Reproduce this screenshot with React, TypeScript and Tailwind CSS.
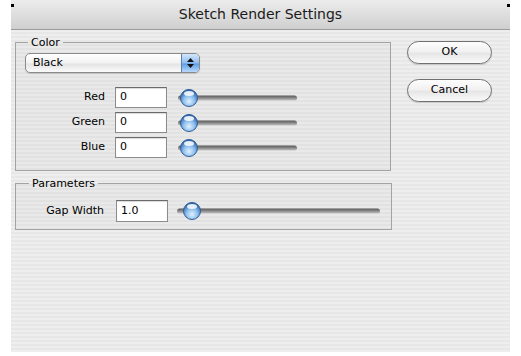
import React from "react";

function Slider({ width, knobX, trackStart, trackEnd }: { width: number; knobX: number; trackStart: number; trackEnd: number }) {
  return (
    <svg width={width} height={20} viewBox={`0 0 ${width} 20`} className="block">
      <defs>
        <linearGradient id="trk" x1="0" y1="0" x2="0" y2="1">
          <stop offset="0" stopColor="#585858" />
          <stop offset="0.5" stopColor="#8a8a8a" />
          <stop offset="1" stopColor="#c4c4c4" />
        </linearGradient>
        <radialGradient id="knob" cx="0.5" cy="0.7" r="0.65">
          <stop offset="0" stopColor="#e2f1ff" />
          <stop offset="0.5" stopColor="#8fc0ee" />
          <stop offset="1" stopColor="#2c64ae" />
        </radialGradient>
      </defs>
      <rect x={trackStart} y={7.5} width={trackEnd - trackStart} height={5} rx={2.5} fill="url(#trk)" />
      <circle cx={knobX} cy={10} r={8.5} fill="url(#knob)" stroke="#305e98" strokeWidth={1} />
      <ellipse cx={knobX} cy={5.5} rx={5} ry={2.5} fill="#ffffff" opacity={0.85} />
    </svg>
  );
}

function Field({ value, h }: { value: string; h: string }) {
  return (
    <div className={`w-[52px] ${h} bg-white border border-[#8c8c8c] border-t-[#6a6a6a] shadow-[inset_0_1px_1px_rgba(0,0,0,0.15)] pl-[4px] flex items-center text-[11px] text-black`}>
      {value}
    </div>
  );
}

function Row({ label, value }: { label: string; value: string }) {
  return (
    <div className="flex items-center h-[21px]">
      <div className="w-[80px] text-right text-[11px] text-black">{label}</div>
      <div className="ml-[10px]">
        <Field value={value} h="h-[21px]" />
      </div>
      <div className="ml-[8px]">
        <Slider width={125} knobX={14} trackStart={3} trackEnd={122} />
      </div>
    </div>
  );
}

function AquaButton({ label }: { label: string }) {
  return (
    <div className="w-[85px] h-[23px] rounded-full border border-[#707070] bg-[linear-gradient(#fdfdfd,#f1f1f1_45%,#e6e6e6_55%,#fafafa)] shadow-[0_1px_1px_rgba(0,0,0,0.15)] flex items-center justify-center text-[11px] text-black">
      {label}
    </div>
  );
}

export default function App() {
  return (
    <div className="w-[521px] h-[356px] bg-white px-[11px] pb-[4px] font-['DejaVu_Sans',sans-serif] flex">
      <div className="relative flex-1 flex flex-col">
        <div className="absolute left-0 top-[4px] w-[3px] h-[3px] bg-black" />
        <div className="absolute right-0 top-[4px] w-[3px] h-[3px] bg-black" />
        <div className="h-[30px] shrink-0 bg-[linear-gradient(#ececec,#dedede_50%,#cfcfcf)] border-b border-[#9a9a9a] flex items-center justify-center text-[14px] text-[#1a1a1a]">
          Sketch Render Settings
        </div>
        <div className="flex-1 bg-[repeating-linear-gradient(180deg,#eeeeee_0px,#eeeeee_2px,#e7e7e7_2px,#e7e7e7_4px)] flex pl-[4px] pr-[18px]">
          <div className="w-[376px] pt-[6px] flex flex-col">
            <fieldset className="border border-[#a3a3a3] bg-black/[0.02] px-[9px] pt-[4px] pb-[12px]">
              <legend className="ml-[3px] px-[3px] text-[11px] leading-[13px] text-black">Color</legend>
              <div className="w-[175px] h-[20px] rounded-[5px] border border-[#8a8a8a] bg-[linear-gradient(#ffffff,#f2f2f2_50%,#e3e3e3_55%,#fbfbfb)] shadow-[0_1px_1px_rgba(0,0,0,0.15)] flex items-stretch overflow-hidden">
                <div className="flex-1 pl-[7px] flex items-center text-[11px] text-black">Black</div>
                <div className="w-[18px] bg-[linear-gradient(#d3e6fa,#8fbdf0_50%,#5f9fe6_55%,#b9d9fb)] border-l border-[#5d7fa8] flex flex-col items-center justify-center gap-[2px]">
                  <svg width="7" height="4" viewBox="0 0 7 4"><path d="M0 4 L3.5 0 L7 4 Z" fill="#111" /></svg>
                  <svg width="7" height="4" viewBox="0 0 7 4"><path d="M0 0 L3.5 4 L7 0 Z" fill="#111" /></svg>
                </div>
              </div>
              <div className="mt-[14px] flex flex-col gap-[4px]">
                <Row label="Red" value="0" />
                <Row label="Green" value="0" />
                <Row label="Blue" value="0" />
              </div>
            </fieldset>
            <fieldset className="mt-[6px] border border-[#a3a3a3] bg-black/[0.02] px-[9px] pt-[10px] pb-[7px]">
              <legend className="ml-[4px] px-[3px] text-[11px] leading-[13px] text-black">Parameters</legend>
              <div className="flex items-center h-[22px]">
                <div className="w-[79px] text-right text-[11px] text-black">Gap Width</div>
                <div className="ml-[12px]">
                  <Field value="1.0" h="h-[22px]" />
                </div>
                <div className="ml-[6px]">
                  <Slider width={208} knobX={18} trackStart={3} trackEnd={206} />
                </div>
              </div>
            </fieldset>
          </div>
          <div className="ml-[16px] pt-[11px] flex flex-col gap-[15px]">
            <AquaButton label="OK" />
            <AquaButton label="Cancel" />
          </div>
        </div>
      </div>
    </div>
  );
}
